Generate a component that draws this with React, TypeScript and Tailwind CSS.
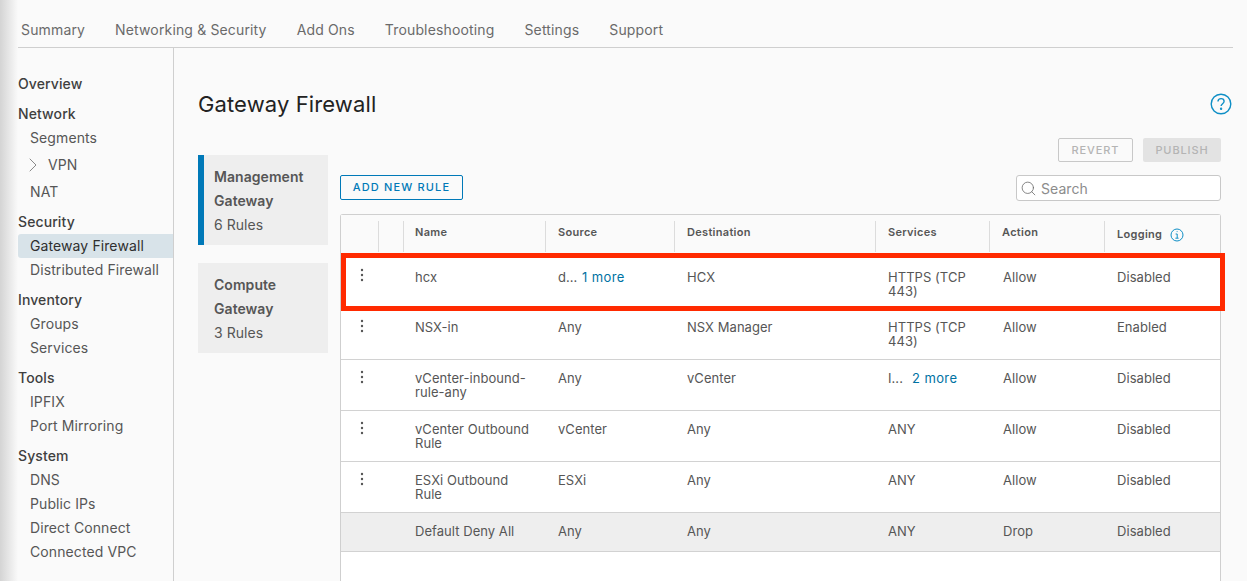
import React from "react";
import { ChevronRight, Search } from "lucide-react";

const tabs = ["Summary", "Networking & Security", "Add Ons", "Troubleshooting", "Settings", "Support"];

type Nav = { t: string; h?: boolean; a?: boolean; c?: boolean };
const nav: Nav[] = [
  { t: "Overview", h: true },
  { t: "Network", h: true },
  { t: "Segments" },
  { t: "VPN", c: true },
  { t: "NAT" },
  { t: "Security", h: true },
  { t: "Gateway Firewall", a: true },
  { t: "Distributed Firewall" },
  { t: "Inventory", h: true },
  { t: "Groups" },
  { t: "Services" },
  { t: "Tools", h: true },
  { t: "IPFIX" },
  { t: "Port Mirroring" },
  { t: "System", h: true },
  { t: "DNS" },
  { t: "Public IPs" },
  { t: "Direct Connect" },
  { t: "Connected VPC" },
];

const grid = "grid grid-cols-[37px_25px_142px_129px_201px_114px_115px_1fr]";

type Row = { name: string; src: React.ReactNode; dst: string; svc: React.ReactNode; act: string; log: string };
const more = (a: string, b: string) => (
  <span className="flex">
    <span className="w-[24px]">{a}</span>
    <span className="text-[#0072a3] tracking-[0.4px]">{b}</span>
  </span>
);
const rows: Row[] = [
  { name: "hcx", src: more("d...", "1 more"), dst: "HCX", svc: "HTTPS (TCP 443)", act: "Allow", log: "Disabled" },
  { name: "NSX-in", src: "Any", dst: "NSX Manager", svc: "HTTPS (TCP 443)", act: "Allow", log: "Enabled" },
  { name: "vCenter-inbound-rule-any", src: "Any", dst: "vCenter", svc: more("I...", "2 more"), act: "Allow", log: "Disabled" },
  { name: "vCenter Outbound Rule", src: "vCenter", dst: "Any", svc: "ANY", act: "Allow", log: "Disabled" },
  { name: "ESXi Outbound Rule", src: "ESXi", dst: "Any", svc: "ANY", act: "Allow", log: "Disabled" },
];

function Dots() {
  return (
    <svg width="4" height="14" viewBox="0 0 4 14" className="ml-[19px]" fill="#565656">
      <circle cx="2" cy="2" r="1.2" />
      <circle cx="2" cy="7" r="1.2" />
      <circle cx="2" cy="12" r="1.2" />
    </svg>
  );
}

function Head({ t, low, first, children }: { t?: string; low?: boolean; first?: boolean; children?: React.ReactNode }) {
  return (
    <div className={`flex h-[31px] items-start gap-[8px] border-l border-[#dcdcdc] text-[11px] leading-[14px] font-semibold tracking-[0.3px] text-[#565656] ${first ? "pl-[11px]" : "pl-[12px]"} ${low ? "pt-[6px]" : "pt-[4px]"}`}>
      {t}
      {children}
    </div>
  );
}

export default function App() {
  return (
    <div className="relative h-[581px] w-[1247px] overflow-hidden bg-[#fafafa] pr-[14px] pl-[18px] font-['Inter','Liberation_Sans',sans-serif] text-[13px] tracking-[0.05px] text-[#565656]">
      <div className="absolute top-0 left-0 h-full w-[18px] bg-gradient-to-r from-[#d4d4d4] to-[#fafafa]" />

      <div className="relative flex h-[48px] items-start gap-[30px] border-b border-[#cfcfcf] pt-[21px] pl-[3px] text-[14px] leading-[18px] tracking-[0.15px] text-[#6a6a6a]">
        {tabs.map((t) => (
          <span key={t}>{t}</span>
        ))}
      </div>

      <div className="relative flex h-[533px]">
        <div className="w-[156px] shrink-0 border-r border-[#cfcfcf] pt-[24px] text-[14px] leading-[24px] tracking-[0.1px]">
          {nav.map((n) =>
            n.h ? (
              <div key={n.t} className="mt-[6px] h-[24px] font-medium text-[#3f3f3f] first:mt-0">{n.t}</div>
            ) : n.c ? (
              <div key={n.t} className="my-[3px] flex h-[24px] items-center pl-[3px]">
                <ChevronRight size={24} strokeWidth={1} color="#8a8a8a" />
                <span className="ml-[3px]">{n.t}</span>
              </div>
            ) : (
              <div key={n.t} className={n.a ? "h-[24px] rounded-l-[3px] bg-[#d8e3e9] pl-[12px] text-[#2f2f2f]" : "h-[24px] pl-[12px]"}>{n.t}</div>
            )
          )}
        </div>

        <div className="flex-1 pl-[24px]">
          <div className="flex h-[90px] items-start justify-between pt-[42px]">
            <h1 className="text-[22px] leading-[28px] tracking-[0.12px] text-[#222]">Gateway Firewall</h1>
            <svg width="22" height="22" viewBox="0 0 22 22" className="mt-[3px] mr-[1px]" fill="none" stroke="#0f8fc6" strokeWidth="1.4">
              <circle cx="11" cy="11" r="9.8" />
              <path d="M8 8.6c0-1.9 1.4-3 3.1-3s3 1.1 3 2.7c0 2.4-3 2.4-3 4.8" />
              <circle cx="11.1" cy="15.8" r="0.5" fill="#0f8fc6" />
            </svg>
          </div>

          <div className="flex">
            <div className="w-[130px] shrink-0 pt-[17px] text-[14px]">
              <div className="h-[90px] border-l-[6px] border-[#0079b8] bg-[#eeeeee] pt-[10px] pl-[10px] leading-[24px]">
                <div className="font-semibold">Management</div>
                <div className="font-semibold">Gateway</div>
                <div>6 Rules</div>
              </div>
              <div className="mt-[18px] h-[90px] bg-[#eeeeee] pt-[10px] pl-[16px] leading-[24px]">
                <div className="font-semibold">Compute</div>
                <div className="font-semibold">Gateway</div>
                <div>3 Rules</div>
              </div>
            </div>

            <div className="ml-[12px] w-[881px] shrink-0">
              <div className="flex h-[76px] flex-col">
                <div className="flex h-[37px] justify-end gap-[10px]">
                  <button className="h-[24px] w-[75px] rounded-[2px] border border-[#c8c8c8] text-[11px] font-medium tracking-[0.9px] text-[#b4b4b4]">REVERT</button>
                  <button className="h-[24px] w-[78px] rounded-[2px] bg-[#e3e3e3] text-[11px] font-medium tracking-[0.9px] text-[#b4b4b4]">PUBLISH</button>
                </div>
                <div className="flex items-start justify-between">
                  <button className="h-[25px] w-[123px] rounded-[2px] border border-[#0079b8] text-[11px] font-medium tracking-[1.15px] text-[#0079b8]">ADD NEW RULE</button>
                  <div className="flex h-[26px] w-[205px] items-center rounded-[3px] border border-[#c8c8c8] bg-white pl-[3px]">
                    <Search size={17} strokeWidth={1.1} color="#666" />
                    <span className="ml-[4px] text-[14px] text-[#8c8c8c]">Search</span>
                  </div>
                </div>
              </div>

              <div className="h-[400px] rounded-t-[3px] border border-b-0 border-[#cfcfcf] bg-white">
                <div className={`${grid} h-[38px] bg-[#fafafa] pt-[6px]`}>
                  <div />
                  <Head />
                  <Head t="Name" first />
                  <Head t="Source" />
                  <Head t="Destination" />
                  <Head t="Services" />
                  <Head t="Action" />
                  <Head t="Logging" low>
                    <svg width="14" height="14" viewBox="0 0 14 14" fill="none" stroke="#0f8fc6" strokeWidth="1" className="mt-[1px]">
                      <circle cx="7" cy="7" r="6" />
                      <path d="M5.6 6h1.6v4M5.4 10.2h3.2M6.7 3.6h.8" />
                    </svg>
                  </Head>
                </div>
                {rows.map((r, i) => {
                  const pt = i === 0 ? "pt-[17px]" : "pt-[11px]";
                  return (
                    <div key={r.name} className={`${grid} border-b border-[#d2d2d2] leading-[14px] ${i === 0 ? "h-[56px]" : "h-[51px]"}`}>
                      <div className={i === 0 ? "pt-[15px]" : "pt-[10px]"}><Dots /></div>
                      <div />
                      <div className={`pr-[10px] pl-[12px] ${pt}`}>{r.name}</div>
                      <div className={`pl-[13px] ${pt}`}>{r.src}</div>
                      <div className={`pl-[13px] ${pt}`}>{r.dst}</div>
                      <div className={`pr-[20px] pl-[13px] ${pt}`}>{r.svc}</div>
                      <div className={`pl-[14px] ${pt}`}>{r.act}</div>
                      <div className={`pl-[13px] ${pt}`}>{r.log}</div>
                    </div>
                  );
                })}
                <div className={`${grid} h-[39px] border-b border-[#d2d2d2] bg-[#eeeeee] leading-[14px]`}>
                  <div />
                  <div />
                  <div className="pt-[11px] pl-[12px]">Default Deny All</div>
                  <div className="pt-[11px] pl-[13px]">Any</div>
                  <div className="pt-[11px] pl-[13px]">Any</div>
                  <div className="pt-[11px] pl-[13px]">ANY</div>
                  <div className="pt-[11px] pl-[14px]">Drop</div>
                  <div className="pt-[11px] pl-[13px]">Disabled</div>
                </div>
              </div>
            </div>
          </div>
        </div>
      </div>

      <div className="absolute top-[253px] left-[341px] h-[58px] w-[884px] border-[5px] border-[#ff2a00]" />
    </div>
  );
}
